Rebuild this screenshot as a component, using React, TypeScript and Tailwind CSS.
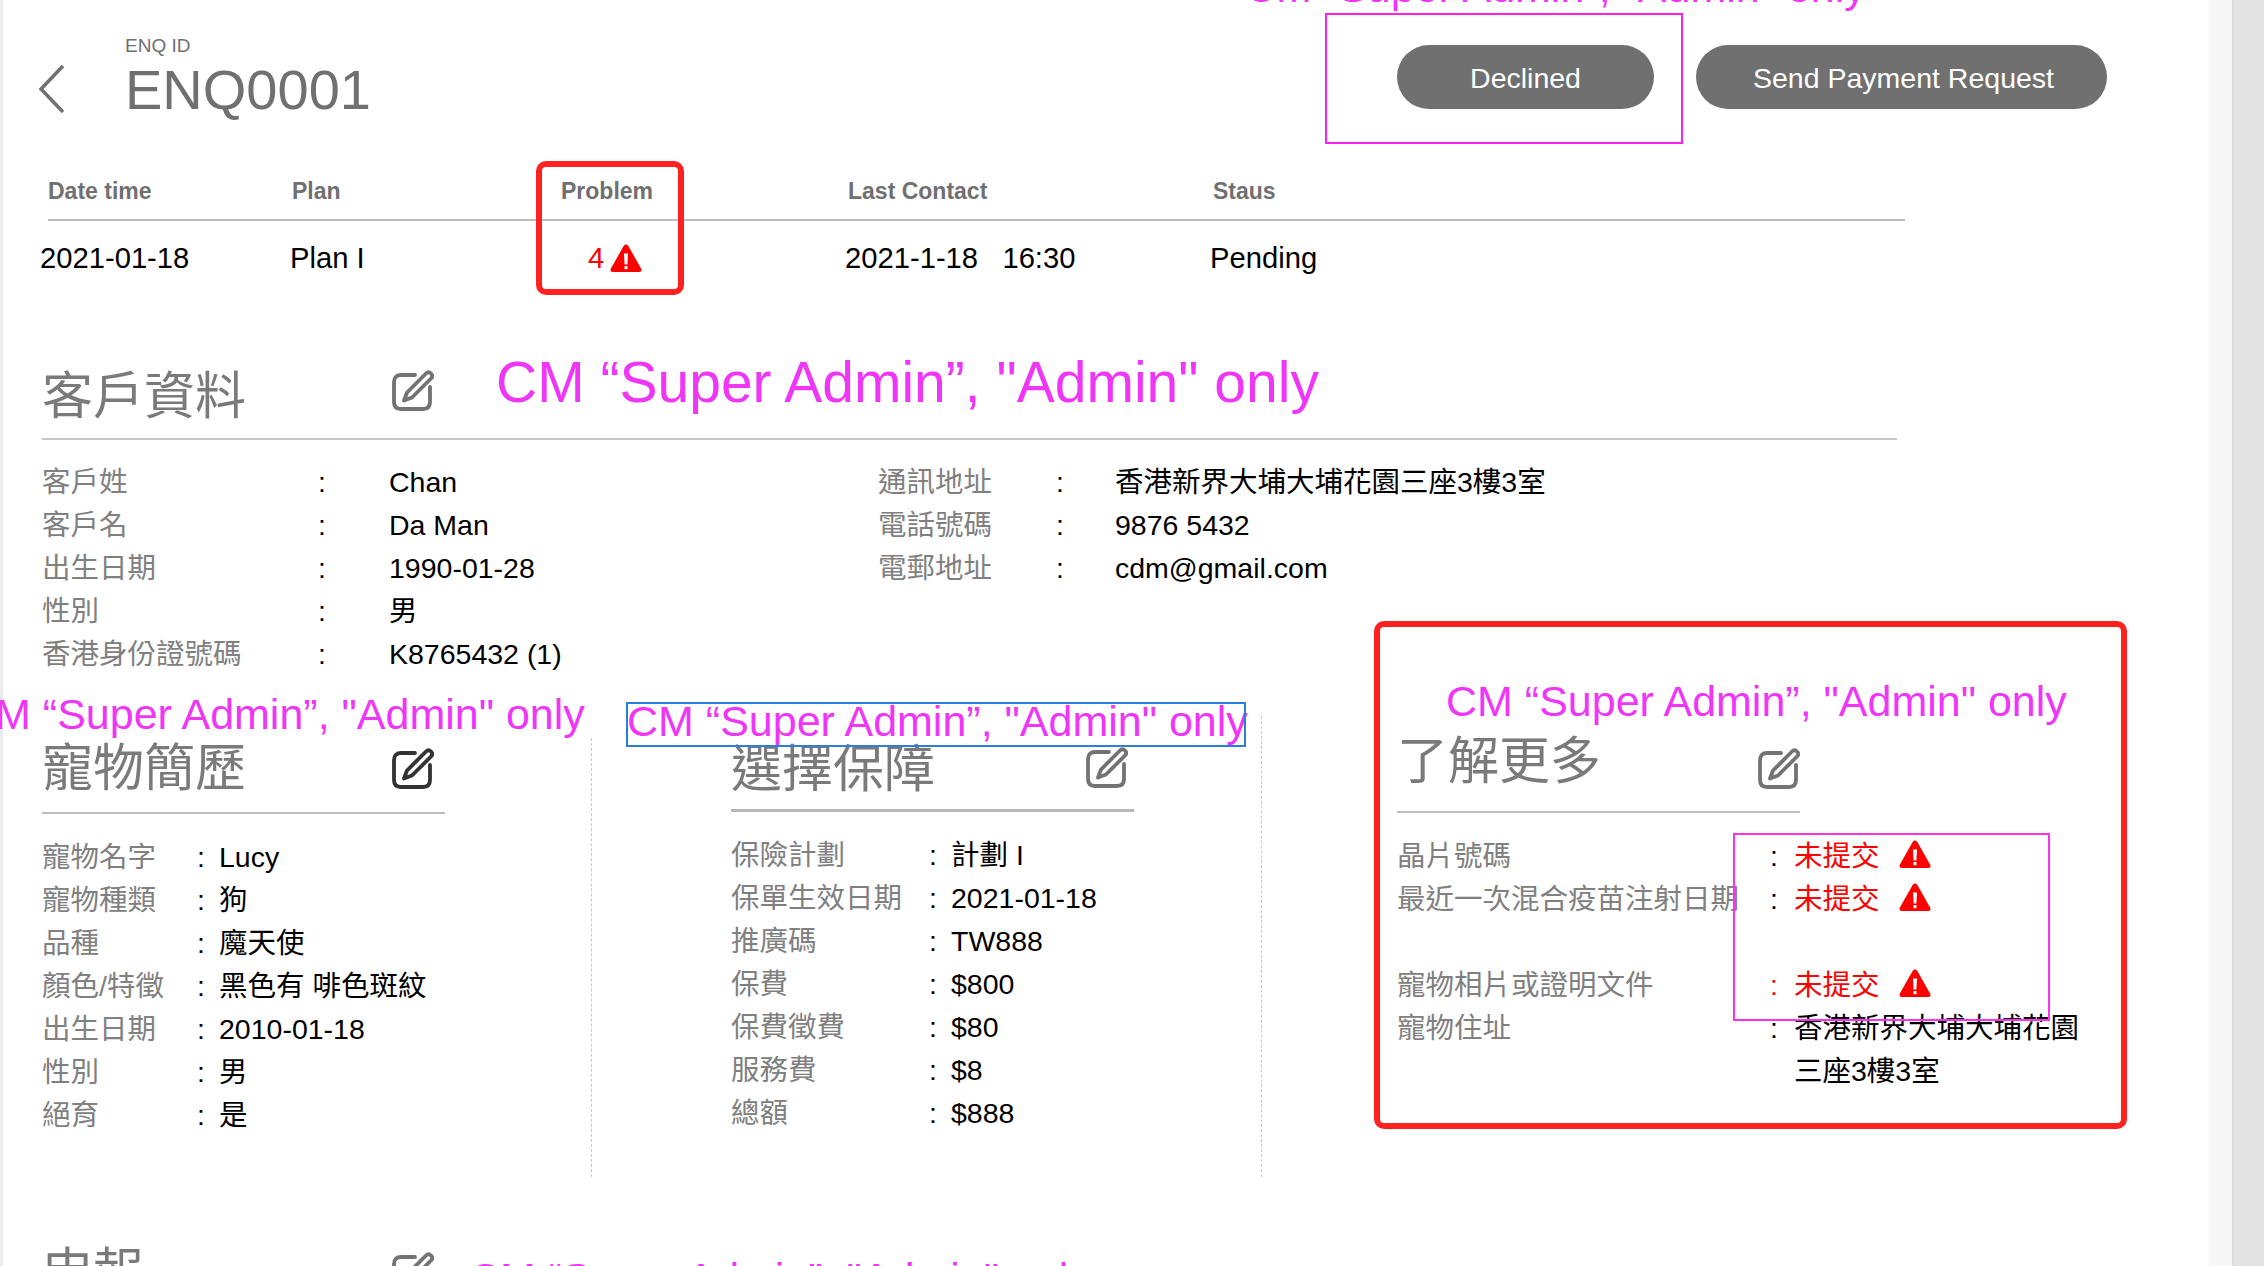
import React from "react";

const FONT = "font-['Liberation_Sans','Noto_Sans_CJK_TC',sans-serif]";

const EditIcon = ({ dark = false, className = "" }: { dark?: boolean; className?: string }) => (
  <svg className={className} width="42" height="41" viewBox="0 0 42 41" fill="none" stroke={dark ? "#333333" : "#737373"} strokeWidth="3.800" strokeLinecap="round" strokeLinejoin="round">
    <path d="M23 5H9C4.500 5 2 7.500 2 12V32C2 36.500 4.500 39 9 39H31C35.500 39 38 36.500 38 32V17" />
    <path d="M34 3.500c1.500-1.500 3.500-1.500 5 0s1.500 3.500 0 5L20 27.500l-8 3 3-8L34 3.500z" />
  </svg>
);

const WarnIcon = ({ className = "" }: { className?: string }) => (
  <svg className={className} width="32" height="29" viewBox="0 0 32 29">
    <path d="M16 0.500c1 0 1.800.6 2.400 1.600l12.800 22.700c.9 1.700 0 3.200-2 3.200H2.800c-2 0-2.900-1.500-2-3.200L13.600 2.100C14.200 1.100 15 .5 16 .5z" fill="#ff0000" />
    <path d="M14 9.500h4l-.6 11h-2.800z" fill="#fff" />
    <rect x="14.500" y="22" width="3" height="3.200" fill="#fff" />
  </svg>
);

const Note = ({ className }: { className: string }) => (
  <span className={"absolute whitespace-nowrap text-[#ef36f7] leading-none " + className}>CM “Super Admin”, "Admin" only</span>
);

interface SectionTitleProps {
  title: string;
  dark?: boolean;
  gap: string;
  rule: string;
  iconClass?: string;
  titleClass?: string;
}

const SectionTitle = ({ title, dark, gap, rule, iconClass = "", titleClass = "" }: SectionTitleProps) => (
  <div className={"flex items-start " + rule}>
    <div className={gap}>
      <h2 className={"h-[60px] flex items-center text-[51px] leading-none text-[#7a7a7a] font-normal whitespace-nowrap " + titleClass}>{title}</h2>
    </div>
    <div className="h-[60px] flex items-center">
      <EditIcon dark={dark} className={iconClass} />
    </div>
  </div>
);

interface InfoRowProps {
  label: string;
  value: React.ReactNode;
  labelWidth: string;
  colonWidth: string;
  colonClass?: string;
  colon?: string;
}

const InfoRow = ({ label, value, labelWidth, colonWidth, colonClass = "text-black", colon = ":" }: InfoRowProps) => (
  <div className="flex h-[43px] items-center text-[28.500px] leading-none">
    <span className={"text-[#808080] whitespace-nowrap " + labelWidth}>{label}</span>
    <span className={colonClass + " " + colonWidth}>{colon}</span>
    <span className="text-black whitespace-nowrap">{value}</span>
  </div>
);

const customerLeft = [
  ["客戶姓", "Chan"],
  ["客戶名", "Da Man"],
  ["出生日期", "1990-01-28"],
  ["性別", "男"],
  ["香港身份證號碼", "K8765432 (1)"],
];

const customerRight = [
  ["通訊地址", "香港新界大埔大埔花園三座3樓3室"],
  ["電話號碼", "9876 5432"],
  ["電郵地址", "cdm@gmail.com"],
];

const petRows = [
  ["寵物名字", "Lucy"],
  ["寵物種類", "狗"],
  ["品種", "魔天使"],
  ["顏色/特徵", "黑色有 啡色斑紋"],
  ["出生日期", "2010-01-18"],
  ["性別", "男"],
  ["絕育", "是"],
];

const planRows = [
  ["保險計劃", "計劃 I"],
  ["保單生效日期", "2021-01-18"],
  ["推廣碼", "TW888"],
  ["保費", "$800"],
  ["保費徵費", "$80"],
  ["服務費", "$8"],
  ["總額", "$888"],
];

const Missing = () => (
  <span className="flex items-center">
    <span className="text-[#ff0000] w-[105px]">未提交</span>
    <WarnIcon className="mb-[4px]" />
  </span>
);

export default function App() {
  return (
    <div className={"relative w-[2264px] h-[1266px] overflow-hidden bg-white flex " + FONT}>
      <div className="w-[3px] bg-[#ececec]" />

      <main className="flex-1 min-w-0">
        {/* Header */}
        <header className="flex h-[161px]">
          <svg className="ml-[33px] mt-[64px]" width="32" height="50" viewBox="0 0 32 50" fill="none" stroke="#707070" strokeWidth="3.500">
            <path d="M27 2L5 25l22 23" />
          </svg>
          <div className="ml-[57px] mt-[36px]">
            <p className="text-[19px] leading-none text-[#707070]">ENQ ID</p>
            <h1 className="text-[56px] leading-none text-[#707070] mt-[7px]">ENQ0001</h1>
          </div>
          <div className="ml-auto mr-[102px] mt-[45px] flex gap-[42px]">
            <button className="w-[257px] h-[64px] pt-[2px] rounded-full bg-[#707070] text-white text-[28.500px]">Declined</button>
            <button className="w-[411px] h-[64px] pt-[2px] pl-[4px] rounded-full bg-[#707070] text-white text-[28.500px]">Send Payment Request</button>
          </div>
        </header>

        {/* Summary table */}
        <div className="flex ml-[45px] w-[1857px] h-[60px] pt-[19px] border-b-2 border-[#bdbdbd] text-[23px] font-bold leading-none text-[#707070]">
          <span className="w-[244px]">Date time</span>
          <span className="w-[269px]">Plan</span>
          <span className="w-[287px]">Problem</span>
          <span className="w-[365px]">Last Contact</span>
          <span>Staus</span>
        </div>
        <div className="flex items-center ml-[37px] h-[76px] text-[29.200px] leading-none text-black">
          <span className="w-[250px]">2021-01-18</span>
          <span className="w-[298px]">Plan I</span>
          <span className="w-[257px] flex items-center gap-[6px] text-[#ff0000]">4 <WarnIcon /></span>
          <span className="w-[365px] whitespace-pre">2021-1-18   16:30</span>
          <span>Pending</span>
        </div>

        {/* 客戶資料 */}
        <section className="mt-[66px] ml-[39px] w-[1855px]">
          <SectionTitle title="客戶資料" gap="w-[350px]" titleClass="mt-[3px]" iconClass="mb-[5px]" rule="h-[77px] border-b-2 border-[#c8c8c8]" />
          <div className="flex mt-[21px]">
            <div className="w-[836px]">
              {customerLeft.map(([label, value]) => (
                <InfoRow key={label} label={label} value={value} labelWidth="w-[276px]" colonWidth="w-[71px]" />
              ))}
            </div>
            <div>
              {customerRight.map(([label, value]) => (
                <InfoRow key={label} label={label} value={value} labelWidth="w-[178px]" colonWidth="w-[59px]" />
              ))}
            </div>
          </div>
        </section>

        <div className="flex mt-[40px] ml-[39px] h-[461px]">
          {/* 寵物簡歷 */}
          <section className="w-[549px] pt-[22px]">
            <SectionTitle title="寵物簡歷" dark gap="w-[350px]" rule="w-[403px] h-[76px] border-b-2 border-[#bdbdbd]" />
            <div className="mt-[22px]">
              {petRows.map(([label, value]) => (
                <InfoRow key={label} label={label} value={value} labelWidth="w-[155px]" colonWidth="w-[22px]" />
              ))}
            </div>
          </section>
          <div className="mt-[22px] border-l border-dashed border-[#c8c8c8]" />

          {/* 選擇保障 */}
          <section className="ml-[139px] w-[530px] pt-[20px]">
            <SectionTitle title="選擇保障" gap="w-[355px]" titleClass="mt-[3px]" iconClass="mt-[3px]" rule="w-[403px] h-[76px] border-b-[3px] border-[#b8b8b8]" />
            <div className="mt-[22px]">
              {planRows.map(([label, value]) => (
                <InfoRow key={label} label={label} value={value} labelWidth="w-[198px]" colonWidth="w-[22px]" />
              ))}
            </div>
          </section>
          <div className="border-l border-dashed border-[#c8c8c8]" />

          {/* 了解更多 */}
          <section className="ml-[135px] pt-[15px]">
            <SectionTitle title="了解更多" gap="w-[366px]" iconClass="mt-[14px]" rule="w-[403px] h-[82px] border-b-2 border-[#c0c0c0]" />
            <div className="mt-[22px]">
              <InfoRow label="晶片號碼" value={<Missing />} labelWidth="w-[373px]" colonWidth="w-[24px]" />
              <InfoRow label="最近一次混合疫苗注射日期" value={<Missing />} labelWidth="w-[373px]" colonWidth="w-[24px]" />
              <div className="h-[43px]" />
              <InfoRow label="寵物相片或證明文件" value={<Missing />} labelWidth="w-[373px]" colonWidth="w-[24px]" colonClass="text-[#ff0000]" />
              <InfoRow label="寵物住址" value="香港新界大埔大埔花園" labelWidth="w-[373px]" colonWidth="w-[24px]" />
              <InfoRow label="" colon="" value="三座3樓3室" labelWidth="w-[373px]" colonWidth="w-[24px]" />
            </div>
          </section>
        </div>

        {/* 申報 */}
        <section className="mt-[65px] ml-[39px]">
          <SectionTitle title="申報" gap="w-[350px]" rule="w-[403px]" />
        </section>
      </main>

      <div className="w-[25px] bg-[#f7f7f7] border-r-2 border-[#dcdcdc]" />
      <div className="w-[30px] bg-[#e3e3e3]" />

      {/* Review annotations lying over the page */}
      <Note className="left-[1245px] top-[-34px] text-[43px]" />
      <div className="absolute left-[1325px] top-[13px] w-[358px] h-[131px] border-2 border-[#ff1ff5]" />
      <div className="absolute left-[536px] top-[161px] w-[148px] h-[134px] border-[6px] border-[#ff2020] rounded-[10px]" />
      <Note className="left-[496px] top-[354px] text-[57px]" />
      <Note className="left-[-36px] top-[693px] text-[43px]" />
      <Note className="left-[627px] top-[700px] text-[43px]" />
      <div className="absolute left-[626px] top-[702px] w-[620px] h-[45px] border-2 border-[#2a7de1]" />
      <div className="absolute left-[1374px] top-[621px] w-[753px] h-[508px] border-[6px] border-[#ff2020] rounded-[10px]" />
      <Note className="left-[1446px] top-[680px] text-[43px]" />
      <div className="absolute left-[1733px] top-[833px] w-[317px] h-[188px] border-2 border-[#ff30f0]" />
      <Note className="left-[469px] top-[1257px] text-[43px]" />
    </div>
  );
}
